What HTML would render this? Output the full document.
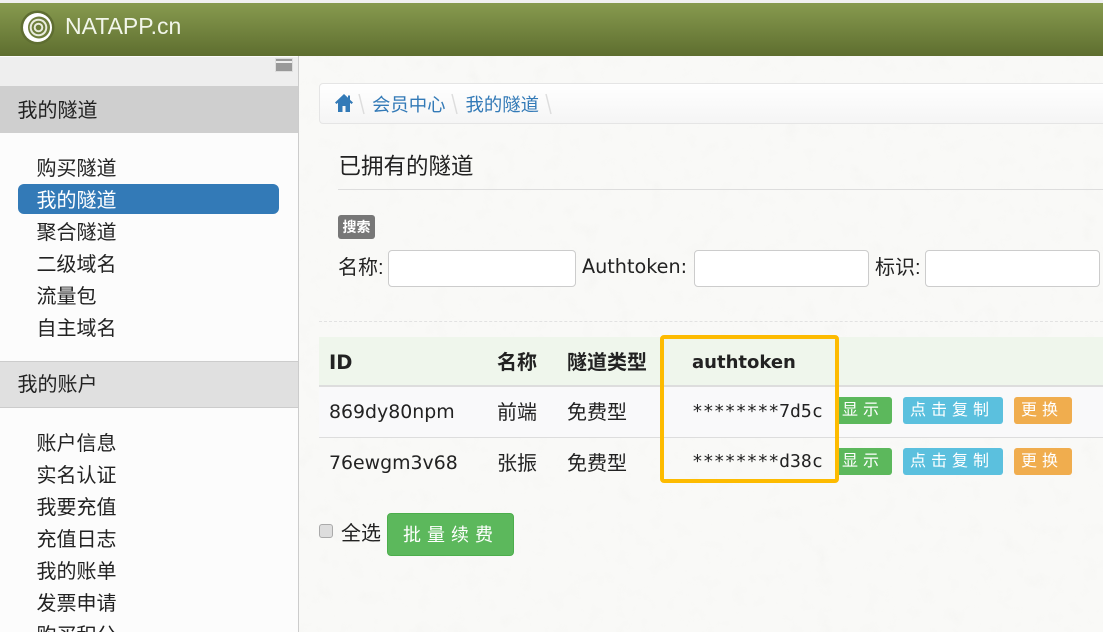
<!DOCTYPE html>
<html><head><meta charset="utf-8">
<style>
html,body{margin:0;padding:0;width:1103px;height:632px;overflow:hidden;background:#f9f9f7;}
body{position:relative;font-family:"Liberation Sans","Noto Sans CJK SC",sans-serif;color:#222;font-size:20px;}
.a{position:absolute;white-space:nowrap;}
.m{position:absolute;left:36.5px;font-size:20px;line-height:34px;height:32px;white-space:nowrap;color:#222;}
.btn{position:absolute;height:27px;line-height:27px;border-radius:3px;color:#fff;font-size:16px;letter-spacing:5px;padding-left:7px;box-sizing:border-box;}
.g{background:#5cb85c}.b{background:#5bc0de}.o{background:#f0ad4e}
.inp{position:absolute;top:250px;height:37px;box-sizing:border-box;background:#fff;border:1px solid #ccc;border-radius:4px;}
.t{font-family:"DejaVu Sans","Noto Sans CJK SC",sans-serif;}
.mono{font-family:"DejaVu Sans Mono",monospace;}
</style></head><body>
<svg class="a" style="left:299px;top:56px" width="804" height="576"><filter id="p"><feTurbulence type="fractalNoise" baseFrequency="0.06" numOctaves="4" seed="7"/><feColorMatrix values="0 0 0 0 .55  0 0 0 0 .55  0 0 0 0 .5  .5 .5 0 0 -.52"/></filter><rect width="804" height="576" filter="url(#p)" opacity=".16"/></svg>
<div class="a" style="left:0;top:0;width:1103px;height:3px;background:#f0f0f0"></div>
<div class="a" style="left:0;top:3px;width:1103px;height:53px;background:linear-gradient(#879a4f,#5e6e2f)"></div>
<svg class="a" style="left:20px;top:9px" width="36" height="36" viewBox="0 0 36 36">
<circle cx="17.5" cy="18.5" r="17" fill="#5f6e32"/>
<circle cx="17.5" cy="18.5" r="14.5" fill="#fff"/>
<circle cx="19" cy="18.5" r="11" fill="#6d7d3b"/>
<circle cx="18.5" cy="18.5" r="8.8" fill="#e9ecdd"/>
<circle cx="18.5" cy="18.5" r="6.8" fill="#6d7d3b"/>
<circle cx="18.5" cy="18.5" r="4.8" fill="#e9ecdd"/>
<circle cx="18.5" cy="18.5" r="2.8" fill="#6d7d3b"/>
</svg>
<div class="a" style="left:65px;top:11px;font-size:23px;line-height:30px;color:#f2f6ea">NATAPP.cn</div>

<div class="a" style="left:0;top:56px;width:298px;height:576px;background:#fcfcfc;border-right:1px solid #ccc"></div>
<div class="a" style="left:0;top:57px;width:298px;height:29px;background:#eee"></div>
<div class="a" style="left:275px;top:58px;width:18px;height:14px;background:#999;border:1px solid #ddd;box-sizing:border-box"><div style="height:2px;margin-top:2px;background:#eee"></div></div>
<div class="a" style="left:0;top:86px;width:298px;height:47px;background:#cfcfcf;line-height:50px;text-indent:17.5px;color:#222">我的隧道</div>
<div class="m" style="top:152px">购买隧道</div>
<div class="a" style="left:18px;top:184px;width:261px;height:30px;background:#337ab7;border-radius:6px"></div>
<div class="m" style="top:184px;color:#fff">我的隧道</div>
<div class="m" style="top:216px">聚合隧道</div>
<div class="m" style="top:248px">二级域名</div>
<div class="m" style="top:280px">流量包</div>
<div class="m" style="top:312px">自主域名</div>
<div class="a" style="left:0;top:361px;width:298px;height:47px;box-sizing:border-box;background:#e0e0e0;border-top:1px solid #ccc;border-bottom:1px solid #ccc;line-height:47px;text-indent:17.5px;color:#222;font-size:20px">我的账户</div>
<div class="m" style="top:427px">账户信息</div>
<div class="m" style="top:459px">实名认证</div>
<div class="m" style="top:491px">我要充值</div>
<div class="m" style="top:523px">充值日志</div>
<div class="m" style="top:555px">我的账单</div>
<div class="m" style="top:587px">发票申请</div>
<div class="m" style="top:619px">购买积分</div>

<div class="a" style="left:319px;top:83px;width:790px;height:41px;box-sizing:border-box;background:linear-gradient(#fff,#f5f5f5);border:1px solid #e5e5e5;border-radius:4px"></div>
<svg class="a" style="left:335px;top:94px" width="18" height="18" viewBox="0 0 18 18"><path d="M9 0L0 8.5 1.5 10 3 8.7V18H7.5V12H10.5V18H15V8.7L16.5 10 18 8.5 15 5.7V1.5H13V3.8Z" fill="#337ab7"/></svg>
<svg class="a" style="left:358px;top:93px" width="8" height="22"><path d="M1 1L6 21" stroke="#ddd" stroke-width="1.5"/></svg>
<div class="a" style="left:372px;top:90px;font-size:18.4px;line-height:30px;color:#337ab7">会员中心</div>
<svg class="a" style="left:451px;top:93px" width="8" height="22"><path d="M1 1L6 21" stroke="#ddd" stroke-width="1.5"/></svg>
<div class="a" style="left:465.5px;top:90px;font-size:18.4px;line-height:30px;color:#337ab7">我的隧道</div>
<svg class="a" style="left:545px;top:93px" width="8" height="22"><path d="M1 1L6 21" stroke="#ddd" stroke-width="1.5"/></svg>

<div class="a" style="left:338.5px;top:151px;font-size:22.5px;line-height:32px;color:#222">已拥有的隧道</div>
<div class="a" style="left:338px;top:189px;width:765px;height:1px;background:#ddd"></div>
<div class="a" style="left:338px;top:215px;width:37px;height:24px;background:#777;border-radius:3px;color:#fff;font-size:14px;font-weight:bold;line-height:24px;text-align:center">搜索</div>
<div class="a" style="left:338px;top:253px;font-size:20px;line-height:30px">名称:</div>
<div class="inp" style="left:388px;width:188px"></div>
<div class="a t" style="left:582px;top:252px;font-size:19.2px;line-height:30px">Authtoken:</div>
<div class="inp" style="left:694px;width:175px"></div>
<div class="a" style="left:875px;top:253px;font-size:20px;line-height:30px">标识:</div>
<div class="inp" style="left:925px;width:175px"></div>
<div class="a" style="left:319px;top:321px;width:784px;border-top:1px dashed #e2e2e2"></div>

<div class="a" style="left:319px;top:337px;width:784px;height:48px;background:#eff6ec"></div>
<div class="a" style="left:319px;top:385px;width:784px;height:2px;background:#ddd"></div>
<div class="a" style="left:319px;top:387px;width:784px;height:50px;background:#f9f9fa"></div>
<div class="a" style="left:319px;top:437px;width:784px;height:1px;background:#ddd"></div>

<div class="a t" style="left:329px;top:348px;font-size:19.5px;font-weight:bold;line-height:30px">ID</div>
<div class="a" style="left:497px;top:348px;font-size:20px;font-weight:bold;line-height:30px">名称</div>
<div class="a" style="left:567px;top:348px;font-size:20px;font-weight:bold;line-height:30px">隧道类型</div>
<div class="a t" style="left:692px;top:348px;font-size:18px;font-weight:bold;line-height:30px">authtoken</div>

<div class="a t" style="left:329px;top:397px;font-size:18.9px;line-height:30px">869dy80npm</div>
<div class="a" style="left:497px;top:398px;line-height:30px">前端</div>
<div class="a" style="left:567px;top:398px;line-height:30px">免费型</div>
<div class="a mono" style="left:692px;top:397px;font-size:18.1px;line-height:30px">********7d5c</div>

<div class="a t" style="left:329px;top:448px;font-size:18.9px;line-height:30px">76ewgm3v68</div>
<div class="a" style="left:497px;top:449px;line-height:30px">张振</div>
<div class="a" style="left:567px;top:449px;line-height:30px">免费型</div>
<div class="a mono" style="left:692px;top:447px;font-size:18.1px;line-height:30px">********d38c</div>

<div class="btn g" style="left:835px;top:397px;width:57px">显示</div>
<div class="btn b" style="left:903px;top:397px;width:100px">点击复制</div>
<div class="btn o" style="left:1014px;top:397px;width:58px">更换</div>
<div class="btn g" style="left:835px;top:448px;width:57px">显示</div>
<div class="btn b" style="left:903px;top:448px;width:100px">点击复制</div>
<div class="btn o" style="left:1014px;top:448px;width:58px">更换</div>

<div class="a" style="left:660px;top:335px;width:179px;height:148px;box-sizing:border-box;border:4px solid #fdbb00;border-radius:4px"></div>

<div class="a" style="left:319px;top:524px;width:14px;height:14px;box-sizing:border-box;background:#ddd;border:1px solid #aaa;border-radius:3px"></div>
<div class="a" style="left:341px;top:519px;line-height:30px;font-size:20px">全选</div>
<div class="a" style="left:387px;top:513px;width:127px;height:43px;background:#5cb85c;border:1px solid #4cae4c;box-sizing:border-box;border-radius:4px;color:#fff;font-size:18px;letter-spacing:6px;line-height:43px;padding-left:15px">批量续费</div>
</body></html>
